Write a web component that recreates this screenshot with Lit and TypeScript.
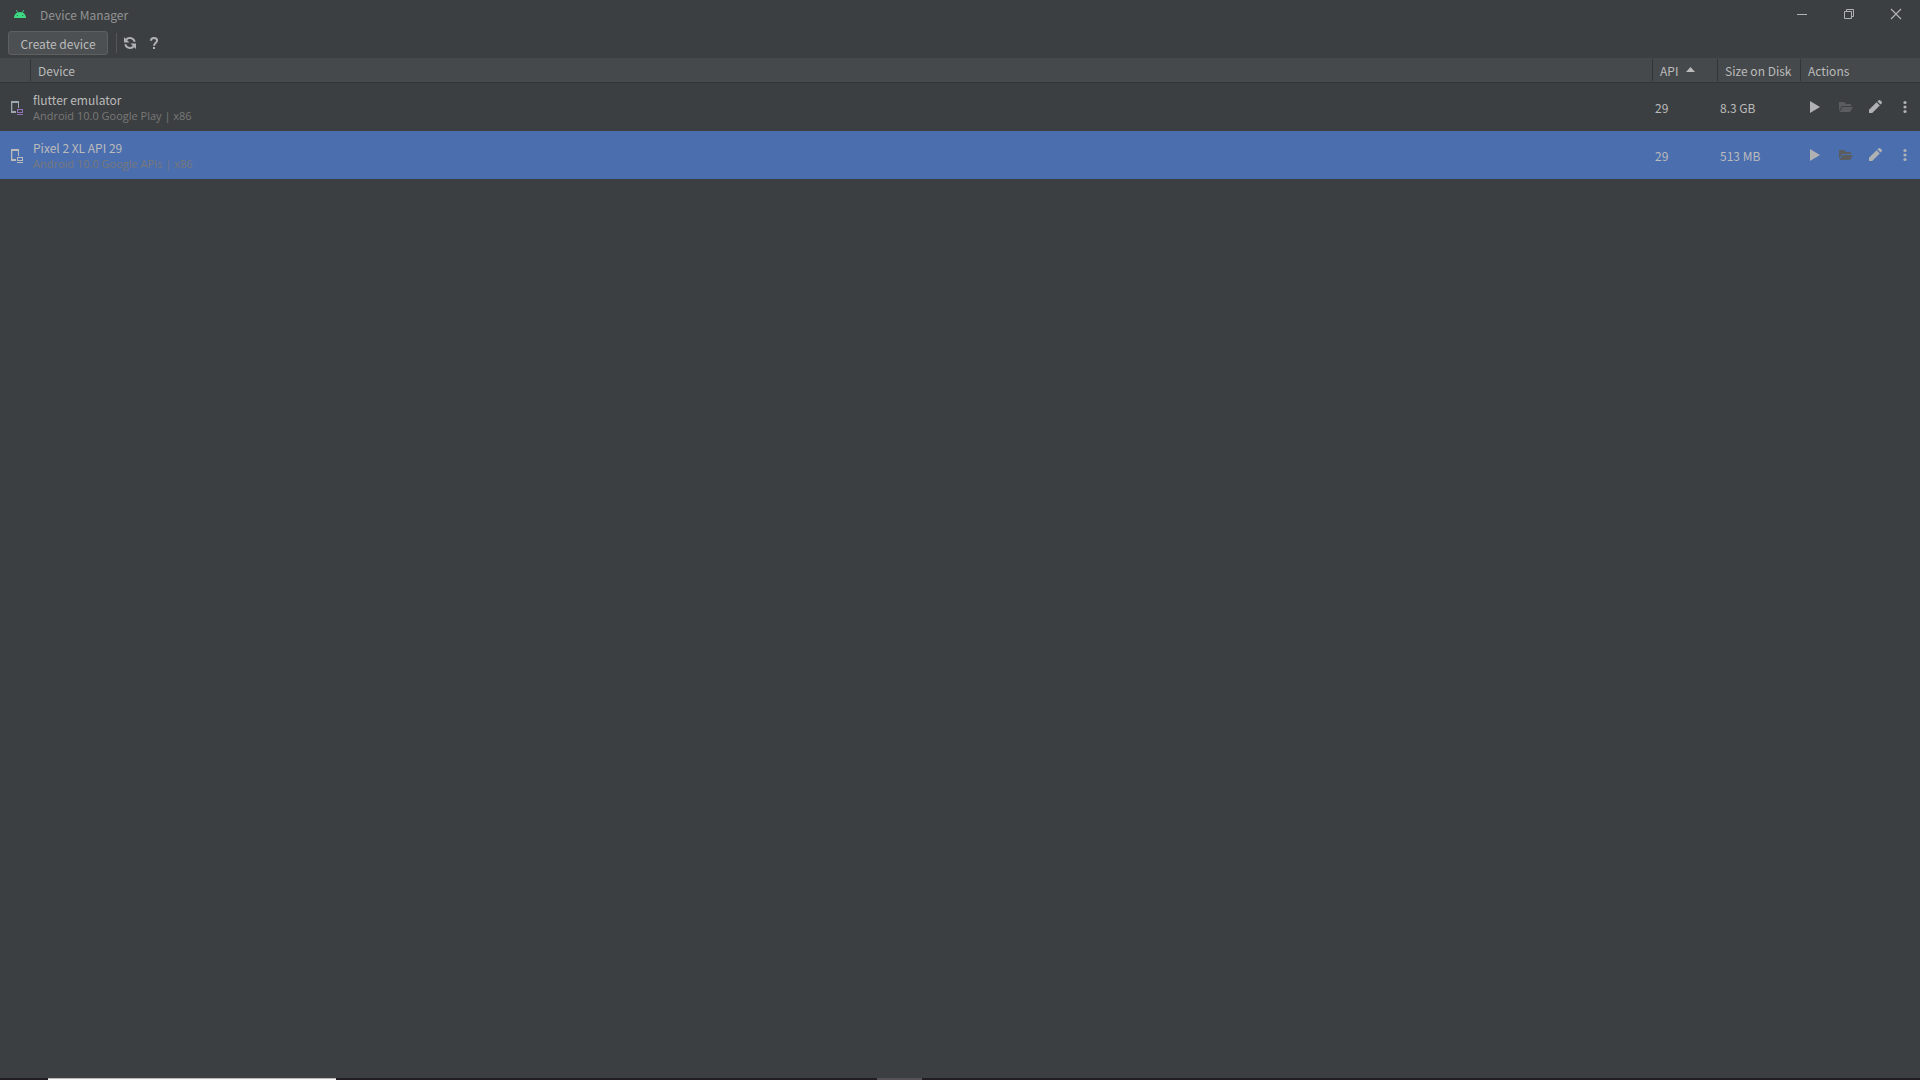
import { LitElement, html, css, svg } from "lit";
import { customElement, property } from "lit/decorators.js";
import { classMap } from "lit/directives/class-map.js";

interface Device {
  name: string;
  target: string;
  api: string;
  size: string;
}

const devices: Device[] = [
  { name: "flutter emulator", target: "Android 10.0 Google Play | x86", api: "29", size: "8.3 GB" },
  { name: "Pixel 2 XL API 29", target: "Android 10.0 Google APIs | x86", api: "29", size: "513 MB" },
];

const shapes = {
  android: svg`<path d="M2 11c.1-2.600 1.300-4.400 3.300-5.300L3.900 3.500l.7-.4 1.400 2.300a6.500 6.500 0 0 1 4 0l1.400-2.300.7.400-1.400 2.200c2 .9 3.200 2.700 3.300 5.300z" fill="#3ddc84"/><circle cx="5.300" cy="8.500" r=".6" fill="#2b5540"/><circle cx="10.700" cy="8.500" r=".6" fill="#2b5540"/>`,
  refresh: svg`<g fill="none" stroke="#afb1b3" stroke-width="2"><path d="M12.700 6.800A5 5 0 0 0 4 4.800"/><path d="M3.300 9.200A5 5 0 0 0 12 11.200"/></g><path d="M2 2v5.500h5.500zM14 14V8.500H8.500z" fill="#afb1b3"/>`,
  help: svg`<path d="M4.900 5.800C5 3.900 6.200 3 8 3s3.100 1 3.100 2.600C11.100 8 8 8 8 10.700" fill="none" stroke="#afb1b3" stroke-width="2"/><path d="M7 12h2v2H7z" fill="#afb1b3"/>`,
  play: svg`<path d="M3 2l10 6-10 6z" fill="#afb1b3"/>`,
  folder: svg`<path d="M2 3h5l2 2h5v2H5l-3 5z" fill="#5a5c5e"/><path d="M5.500 8H16l-3 5H2.500z" fill="#5a5c5e"/>`,
  edit: svg`<path d="M2 14v-3.200l7.600-7.600 3.200 3.200L5.200 14z" fill="#afb1b3"/><path d="M10.400 2.400l1-1a1.400 1.400 0 0 1 2 0l1.200 1.200a1.400 1.400 0 0 1 0 2l-1 1z" fill="#afb1b3"/>`,
  more: svg`<circle cx="8" cy="3.500" r="1.600" fill="#afb1b3"/><circle cx="8" cy="8" r="1.600" fill="#afb1b3"/><circle cx="8" cy="12.500" r="1.600" fill="#afb1b3"/>`,
  minimize: svg`<path d="M3 8h10v1H3z" fill="#b0b2b3"/>`,
  restore: svg`<path d="M3.500 5.500h7v7h-7zM5.500 5.500v-2h7v7h-2" fill="none" stroke="#b0b2b3"/>`,
  close: svg`<path d="M3 3l10 10M13 3L3 13" fill="none" stroke="#b0b2b3" stroke-width="1.200"/>`,
};

const icon = (name: keyof typeof shapes) =>
  html`<svg width="16" height="16" viewBox="0 0 16 16" aria-hidden="true">${shapes[name]}</svg>`;

@customElement("device-table")
class DeviceTable extends LitElement {
  @property({ attribute: false }) devices: Device[] = [];
  @property({ type: Number }) selected = -1;

  static styles = css`
    :host { display: block; }
    table { width: 100%; table-layout: fixed; border-collapse: separate; border-spacing: 0; }
    .type { width: 31px; }
    .api { width: 65px; }
    .size { width: 83px; }
    .actions { width: 119px; }
    th {
      box-sizing: border-box;
      height: 25px;
      padding: 2px 0 0 7px;
      text-align: left;
      font-weight: normal;
      line-height: 20px;
      background: linear-gradient(#323537, #323537) right center / 1px 22px no-repeat, #45494b;
      border-bottom: 1px solid #323537;
      white-space: nowrap;
    }
    th:last-child { background: #45494b; }
    .sort { margin-left: 8px; vertical-align: 4px; fill: #bbbbbb; }
    td { box-sizing: border-box; height: 48px; padding: 2px 0 0 2px; white-space: nowrap; }
    .kind { padding: 0 0 0 8px; }
    .commands { padding: 0 0 0 6px; }
    .kind svg, .tools svg { display: block; }
    .line { fill: #9aa7b0; }
    .badge { fill: #9373b8; }
    .selected td { background: #4b6eaf; }
    .selected .line, .selected .badge { fill: #bbbbbb; }
    .name, .target { line-height: 16px; }
    .target { font-family: "Open Sans", "Noto Sans", sans-serif; font-size: 11px; color: #787878; }
    .tools { display: flex; gap: 14px; }
    button { padding: 0; border: 0; background: none; }
  `;

  render() {
    return html`<table>
      <colgroup><col class="type" /><col /><col class="api" /><col class="size" /><col class="actions" /></colgroup>
      <thead>
        <tr>
          <th aria-label="Type"></th>
          <th>Device</th>
          <th aria-sort="ascending">API<svg class="sort" width="9" height="5" viewBox="0 0 9 5" aria-hidden="true"><path d="M0 5L4.500 0 9 5z" /></svg></th>
          <th>Size on Disk</th>
          <th>Actions</th>
        </tr>
      </thead>
      <tbody>
        ${this.devices.map((d, i) => html`<tr class=${classMap({ selected: i === this.selected })}>
          <td class="kind">
            <svg width="16" height="16" viewBox="0 0 16 16" aria-hidden="true">
              <path class="line" d="M3 2h8v7h-1V4H4.300v8H8v2H3z" />
              <path class="badge" fill-rule="evenodd" d="M9 10h6v4H9zM10 11v2h4v-2zM9 15h6v1H9z" />
            </svg>
          </td>
          <td><div class="name">${d.name}</div><div class="target">${d.target}</div></td>
          <td>${d.api}</td>
          <td>${d.size}</td>
          <td class="commands"><div class="tools">
            <button aria-label="Launch">${icon("play")}</button>
            <button aria-label="Open folder" disabled>${icon("folder")}</button>
            <button aria-label="Edit">${icon("edit")}</button>
            <button aria-label="More actions">${icon("more")}</button>
          </div></td>
        </tr>`)}
      </tbody>
    </table>`;
  }
}

@customElement("app-root")
class AppRoot extends LitElement {
  static styles = css`
    :host {
      display: flex;
      flex-direction: column;
      min-height: 100vh;
      background: #3c3f41;
      color: #bbbbbb;
      font: 12px/16px "Noto Sans CJK KR", "Open Sans", sans-serif;
    }
    svg { display: block; }
    button { padding: 0; border: 0; background: none; color: inherit; font: inherit; }
    .title { display: flex; align-items: center; height: 30px; padding: 0 1px 0 12px; color: #919394; }
    .title span { flex: 1; margin-left: 12px; }
    .window { display: grid; place-items: center; width: 47px; height: 28px; align-self: start; }
    .toolbar { display: flex; align-items: center; height: 28px; padding-left: 8px; }
    .create {
      width: 100px;
      height: 24px;
      padding-top: 2px;
      border: 1px solid #5e6060;
      border-radius: 3px;
      background: #4c5052;
      line-height: 20px;
      margin-bottom: 2px;
    }
    .rule { width: 1px; height: 20px; margin: 0 5px 2px 8px; background: #555555; }
    .tool { margin: 0 8px 2px 0; }
    device-table { flex: 1; }
    .taskbar { display: grid; grid-template-columns: 2.500% 15% 28.200% 2.300% 1fr; height: 2px; background: #211d20; }
    .active { grid-column: 2; background: linear-gradient(#b8b8b8 50%, #fafafa 50%); }
    .idle { grid-column: 4; background: #555154; }
  `;

  render() {
    return html`
      <header class="title">
        ${icon("android")}<span>Device Manager</span>
        <button class="window" aria-label="Minimize">${icon("minimize")}</button>
        <button class="window" aria-label="Restore">${icon("restore")}</button>
        <button class="window" aria-label="Close">${icon("close")}</button>
      </header>
      <div class="toolbar">
        <button class="create">Create device</button>
        <div class="rule"></div>
        <button class="tool" aria-label="Refresh">${icon("refresh")}</button>
        <button class="tool" aria-label="Help">${icon("help")}</button>
      </div>
      <device-table .devices=${devices} .selected=${1}></device-table>
      <footer class="taskbar"><div class="active"></div><div class="idle"></div></footer>
    `;
  }
}
